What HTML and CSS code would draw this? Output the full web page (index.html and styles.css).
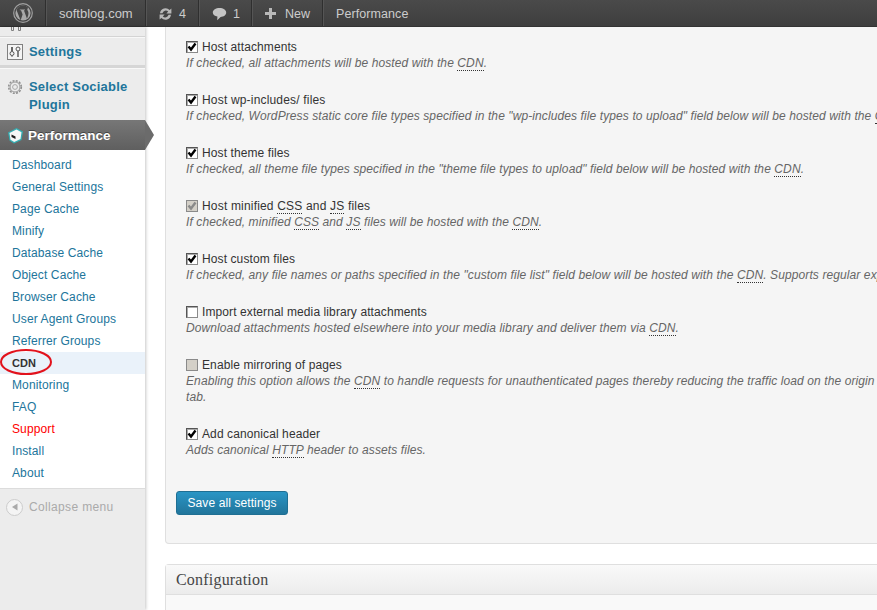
FILE: index.html
```html
<!DOCTYPE html>
<html lang="en">
<head>
<meta charset="utf-8">
<title>Performance - CDN</title>
<link rel="stylesheet" href="styles.css">
</head>
<body>
<header class="bar">
  <div class="bar-item bar-logo">
    <svg width="20" height="20" viewBox="0 0 20 20"><circle cx="10" cy="10" r="9.300" fill="none" stroke="#a0a0a0" stroke-width="1.200"/><circle cx="10" cy="10" r="7.600" fill="#a8a8a8"/><path d="M3.600 7.200 7.600 17.400 9.600 11.600 8 7.200H6.800V6.400H12V7.200H10.900L14 15.800 15.200 12.200C15.900 9.800 15.200 8.600 14.600 7.600 14 6.600 14.400 5.200 15.400 5 13.900 3.200 11.900 2.600 10 2.600 7.200 2.600 4.900 4.200 3.600 6.400Z" fill="#464646"/></svg>
  </div>
  <div class="bar-item bar-site"><span>softblog.com</span></div>
  <div class="bar-item bar-updates">
    <svg width="15" height="14" viewBox="0 0 15 14"><path d="M2 6.200A5.600 5.600 0 0 1 11.600 3L13.400 1.400V6.400H8.400L10.200 4.600A3.500 3.500 0 0 0 4.400 6.200ZM13 7.800A5.600 5.600 0 0 1 3.400 11L1.600 12.600V7.600H6.600L4.800 9.400A3.500 3.500 0 0 0 10.600 7.800Z" fill="#b8b8b8"/></svg>
    <span>4</span>
  </div>
  <div class="bar-item bar-comments">
    <svg width="15" height="14" viewBox="0 0 15 14"><path d="M7.500 1C11.200 1 14.200 2.900 14.200 5.500S11.600 9.800 8.600 9.900L5.200 13.200 5.400 9.600C2.800 9.100.8 7.600.8 5.500.8 2.900 3.800 1 7.500 1Z" fill="#c4c4c4"/></svg>
    <span>1</span>
  </div>
  <div class="bar-item bar-new">
    <svg width="11" height="11" viewBox="0 0 11 11"><path d="M4 0H7V4H11V7H7V11H4V7H0V4H4Z" fill="#b8b8b8"/></svg>
    <span>New</span>
  </div>
  <div class="bar-item bar-perf"><span>Performance</span></div>
</header>

<div class="layout">
  <aside class="side">
    <div class="side-stub">
      <svg width="12" height="5" viewBox="0 0 12 5"><path d="M1.500 0V3.500H3.500V0M8.500 0V3.500H10.500V0" fill="none" stroke="#808080"/></svg>
    </div>
    <a class="side-top side-settings">
      <svg class="side-icon" width="16" height="16" viewBox="0 0 16 16"><rect x=".5" y=".5" width="15" height="15" fill="#f4f4f4" stroke="#808080"/><path d="M5 3V7" stroke="#666" stroke-width="2"/><circle cx="5" cy="9.500" r="2" fill="none" stroke="#555"/><path d="M5 11.500V13" stroke="#666"/><circle cx="11" cy="5" r="2" fill="none" stroke="#555"/><path d="M11 7V13" stroke="#666" stroke-width="1.600"/></svg>
      <span>Settings</span>
    </a>
    <a class="side-top side-sociable">
      <svg class="side-icon" width="16" height="16" viewBox="0 0 16 16"><circle cx="8" cy="8" r="6.300" fill="none" stroke="#909090" stroke-width="1.600" stroke-dasharray="2 1.300"/><circle cx="8" cy="8" r="5" fill="#ececec" stroke="#9a9a9a"/><circle cx="8" cy="8" r="2.400" fill="#ececec" stroke="#a8a8a8"/></svg>
      <span class="sociable-text">Select Sociable<br>Plugin</span>
    </a>
    <a class="side-current">
      <svg width="17" height="17" viewBox="0 0 17 17"><path d="M1 5.500 9.500 1 16 4.500 14.500 13 7 16.500 2.500 13.500Z" fill="#35aeb2"/><path d="M2.500 6 9.500 2.500 14.500 5.200 13.500 12 7.200 15 3.500 12.800Z" fill="#f6f6f6"/><path d="M4.500 7.600 8.500 9.500V12L4.500 10Z" fill="#1c1c1c"/></svg>
      <span>Performance</span>
    </a>
    <nav class="submenu">
      <a class="sub">Dashboard</a>
      <a class="sub">General Settings</a>
      <a class="sub">Page Cache</a>
      <a class="sub">Minify</a>
      <a class="sub">Database Cache</a>
      <a class="sub">Object Cache</a>
      <a class="sub">Browser Cache</a>
      <a class="sub">User Agent Groups</a>
      <a class="sub">Referrer Groups</a>
      <a class="sub sub-active">CDN
        <svg class="cdn-ring" width="54" height="28" viewBox="0 0 54 28"><ellipse cx="26" cy="13" rx="25" ry="12" fill="none" stroke="#e2121c" stroke-width="2"/></svg>
      </a>
      <a class="sub">Monitoring</a>
      <a class="sub">FAQ</a>
      <a class="sub sub-red">Support</a>
      <a class="sub">Install</a>
      <a class="sub">About</a>
    </nav>
    <div class="collapse">
      <span class="collapse-btn"><svg width="8" height="8" viewBox="0 0 8 8"><path d="M6.500 0.500V7.500L1 4Z" fill="#aaa"/></svg></span>
      <span>Collapse menu</span>
    </div>
  </aside>

  <main class="main">
    <section class="panel panel-cdn">
      <div class="opt">
        <div class="opt-label"><span class="check on"><svg width="10" height="10" viewBox="0 0 10 10"><path d="M1.500 4.500 4 7.500 8.500 1.500" fill="none" stroke="#000" stroke-width="2.400"/></svg></span><span>Host attachments</span></div>
        <div class="opt-desc">If checked, all attachments will be hosted with the <abbr>CDN</abbr>.</div>
      </div>
      <div class="opt">
        <div class="opt-label"><span class="check on"><svg width="10" height="10" viewBox="0 0 10 10"><path d="M1.500 4.500 4 7.500 8.500 1.500" fill="none" stroke="#000" stroke-width="2.400"/></svg></span><span class="label-wide">Host wp-includes/ files</span></div>
        <div class="opt-desc">If checked, WordPress static core file types specified in the "wp-includes file types to upload" field below will be hosted with the <abbr>CDN</abbr>.</div>
      </div>
      <div class="opt">
        <div class="opt-label"><span class="check on"><svg width="10" height="10" viewBox="0 0 10 10"><path d="M1.500 4.500 4 7.500 8.500 1.500" fill="none" stroke="#000" stroke-width="2.400"/></svg></span><span>Host theme files</span></div>
        <div class="opt-desc">If checked, all theme file types specified in the "theme file types to upload" field below will be hosted with the <abbr>CDN</abbr>.</div>
      </div>
      <div class="opt">
        <div class="opt-label"><span class="check off"><svg width="10" height="10" viewBox="0 0 10 10"><path d="M1.500 4.500 4 7.500 8.500 1.500" fill="none" stroke="#8a8a8a" stroke-width="2.400"/></svg></span><span class="label-wide">Host minified <abbr>CSS</abbr> and <abbr>JS</abbr> files</span></div>
        <div class="opt-desc">If checked, minified <abbr>CSS</abbr> and <abbr>JS</abbr> files will be hosted with the <abbr>CDN</abbr>.</div>
      </div>
      <div class="opt">
        <div class="opt-label"><span class="check on"><svg width="10" height="10" viewBox="0 0 10 10"><path d="M1.500 4.500 4 7.500 8.500 1.500" fill="none" stroke="#000" stroke-width="2.400"/></svg></span><span>Host custom files</span></div>
        <div class="opt-desc">If checked, any file names or paths specified in the "custom file list" field below will be hosted with the <abbr>CDN</abbr>. Supports regular expressions.</div>
      </div>
      <div class="opt">
        <div class="opt-label"><span class="check on"></span><span>Import external media library attachments</span></div>
        <div class="opt-desc">Download attachments hosted elsewhere into your media library and deliver them via <abbr>CDN</abbr>.</div>
      </div>
      <div class="opt">
        <div class="opt-label"><span class="check off"></span><span>Enable mirroring of pages</span></div>
        <div class="opt-desc">Enabling this option allows the <abbr>CDN</abbr> to handle requests for unauthenticated pages thereby reducing the traffic load on the origin server. Updates to the<br>tab.</div>
      </div>
      <div class="opt">
        <div class="opt-label"><span class="check on"><svg width="10" height="10" viewBox="0 0 10 10"><path d="M1.500 4.500 4 7.500 8.500 1.500" fill="none" stroke="#000" stroke-width="2.400"/></svg></span><span>Add canonical header</span></div>
        <div class="opt-desc">Adds canonical <abbr>HTTP</abbr> header to assets files.</div>
      </div>
      <button class="save" type="button">Save all settings</button>
    </section>
    <section class="panel panel-config">
      <h3 class="panel-title">Configuration</h3>
    </section>
  </main>
</div>
</body>
</html>
```
FILE: styles.css
```css
* { box-sizing: border-box; }
html, body { margin: 0; height: 100%; overflow: hidden; }
body { font-family: "Liberation Sans", Arial, sans-serif; font-size: 12px; color: #333; background: #fff; display: flex; flex-direction: column; }

.bar { display: flex; flex: none; height: 27px; background: linear-gradient(#4a4a4a, #3e3e3e); border-bottom: 1px solid #333; color: #ccc; font-size: 12.500px; }
.bar-item { display: flex; align-items: center; gap: 6px; height: 26px; padding-top: 1px; border-right: 1px solid #2f2f2f; box-shadow: 1px 0 0 #555; }
.bar-logo { width: 46px; justify-content: center; padding-left: 1px; padding-top: 0; }
.bar-site { width: 100px; padding-left: 13px; font-size: 13px; }
.bar-updates { width: 53px; padding-left: 12px; }
.bar-comments { width: 53px; padding-left: 13px; }
.bar-new { width: 71px; padding-left: 13px; gap: 9px; }
.bar-perf { border: 0; box-shadow: none; padding-left: 13px; letter-spacing: .08px; }

.layout { display: flex; flex: 1; min-height: 0; }

.side { flex: none; width: 145px; background: #ececec; box-shadow: 1px 0 3px rgba(0, 0, 0, .22); position: relative; z-index: 1; }
.side-stub { display: flex; height: 10px; border-bottom: 1px solid #d4d4d4; padding-left: 10px; overflow: hidden; }
.side-top { display: flex; gap: 6px; color: #21759b; font-size: 13px; letter-spacing: .2px; font-weight: 700; border-top: 1px solid #f8f8f8; border-bottom: 1px solid #d8d8d8; padding-left: 7px; }
.side-settings { height: 31px; align-items: center; border-bottom: 3px solid #d6d6d6; }
.side-sociable { height: 52px; padding-top: 9px; line-height: 18px; border-bottom: 0; }
.side-sociable .side-icon { margin-top: 1px; }
.side-current { display: flex; align-items: center; gap: 4px; height: 30px; padding-left: 7px; color: #fff; font-size: 13.500px; font-weight: 700; background: linear-gradient(#777, #5f5f5f); text-shadow: 0 -1px 0 rgba(0, 0, 0, .4); position: relative; }
.side-current::after { content: ""; position: absolute; left: 145px; top: 0; border-style: solid; border-width: 15px 0 15px 9px; border-color: transparent transparent transparent #6b6b6b; }

.submenu { background: #fff; padding: 4px 0 4px; border-bottom: 1px solid #dcdcdc; }
.sub { display: block; height: 22px; line-height: 22px; padding-left: 12px; color: #21759b; letter-spacing: .12px; position: relative; }
.sub-active { background: #eaf2fa; color: #333; font-weight: 700; font-size: 11px; letter-spacing: 0; }
.sub-red { color: #f00; }
.cdn-ring { position: absolute; left: 0; top: -3px; }

.collapse { display: flex; align-items: center; gap: 6px; height: 36px; padding-left: 6px; color: #aaa; letter-spacing: .35px; }
.collapse-btn { display: flex; align-items: center; justify-content: center; width: 17px; height: 17px; border: 1px solid #ccc; border-radius: 50%; background: #f4f4f4; }

.main { flex: 1; min-width: 0; padding-left: 20px; overflow: hidden; }
.panel { width: 1000px; background: #f5f5f5; border: 1px solid #dfdfdf; }
.panel-cdn { height: 517px; border-top: 0; border-radius: 0 0 0 4px; padding: 12px 0 0 20px; }
.panel-config { margin-top: 20px; height: 60px; border-radius: 4px 0 0 0; background: #f9f9f9; border-bottom: 0; }
.panel-title { margin: 0; height: 30px; padding-left: 10px; font: 400 16px/29px "Liberation Serif", Georgia, serif; letter-spacing: .2px; color: #464646; background: linear-gradient(#f9f9f9, #ececec); border-bottom: 1px solid #dfdfdf; }

.opt { margin-bottom: 21px; line-height: 16px; white-space: nowrap; letter-spacing: .1px; }
.opt-label { display: flex; align-items: center; color: #333; }
.label-wide { letter-spacing: .18px; }
.check { display: flex; align-items: center; justify-content: center; flex: none; width: 12px; height: 12px; margin-right: 4px; border: 1px solid #8a8a8a; border-top-color: #555; border-left-color: #555; background: #fff; box-shadow: inset 1px 1px 0 #aaa; }
.check.off { background: #d4d0c8; border-color: #8a8a8a; box-shadow: none; }
.opt-desc { color: #666; font-style: italic; }
abbr { border-bottom: 1px dotted #333; }

.save { display: block; width: 112px; height: 24px; margin: 33px 0 0 -10px; padding: 0 0 1px; border: 1px solid #1f6f93; border-radius: 3px; color: #fff; background: linear-gradient(#2a95c5, #21759b); font: 12px "Liberation Sans", Arial, sans-serif; letter-spacing: .1px; }
```
